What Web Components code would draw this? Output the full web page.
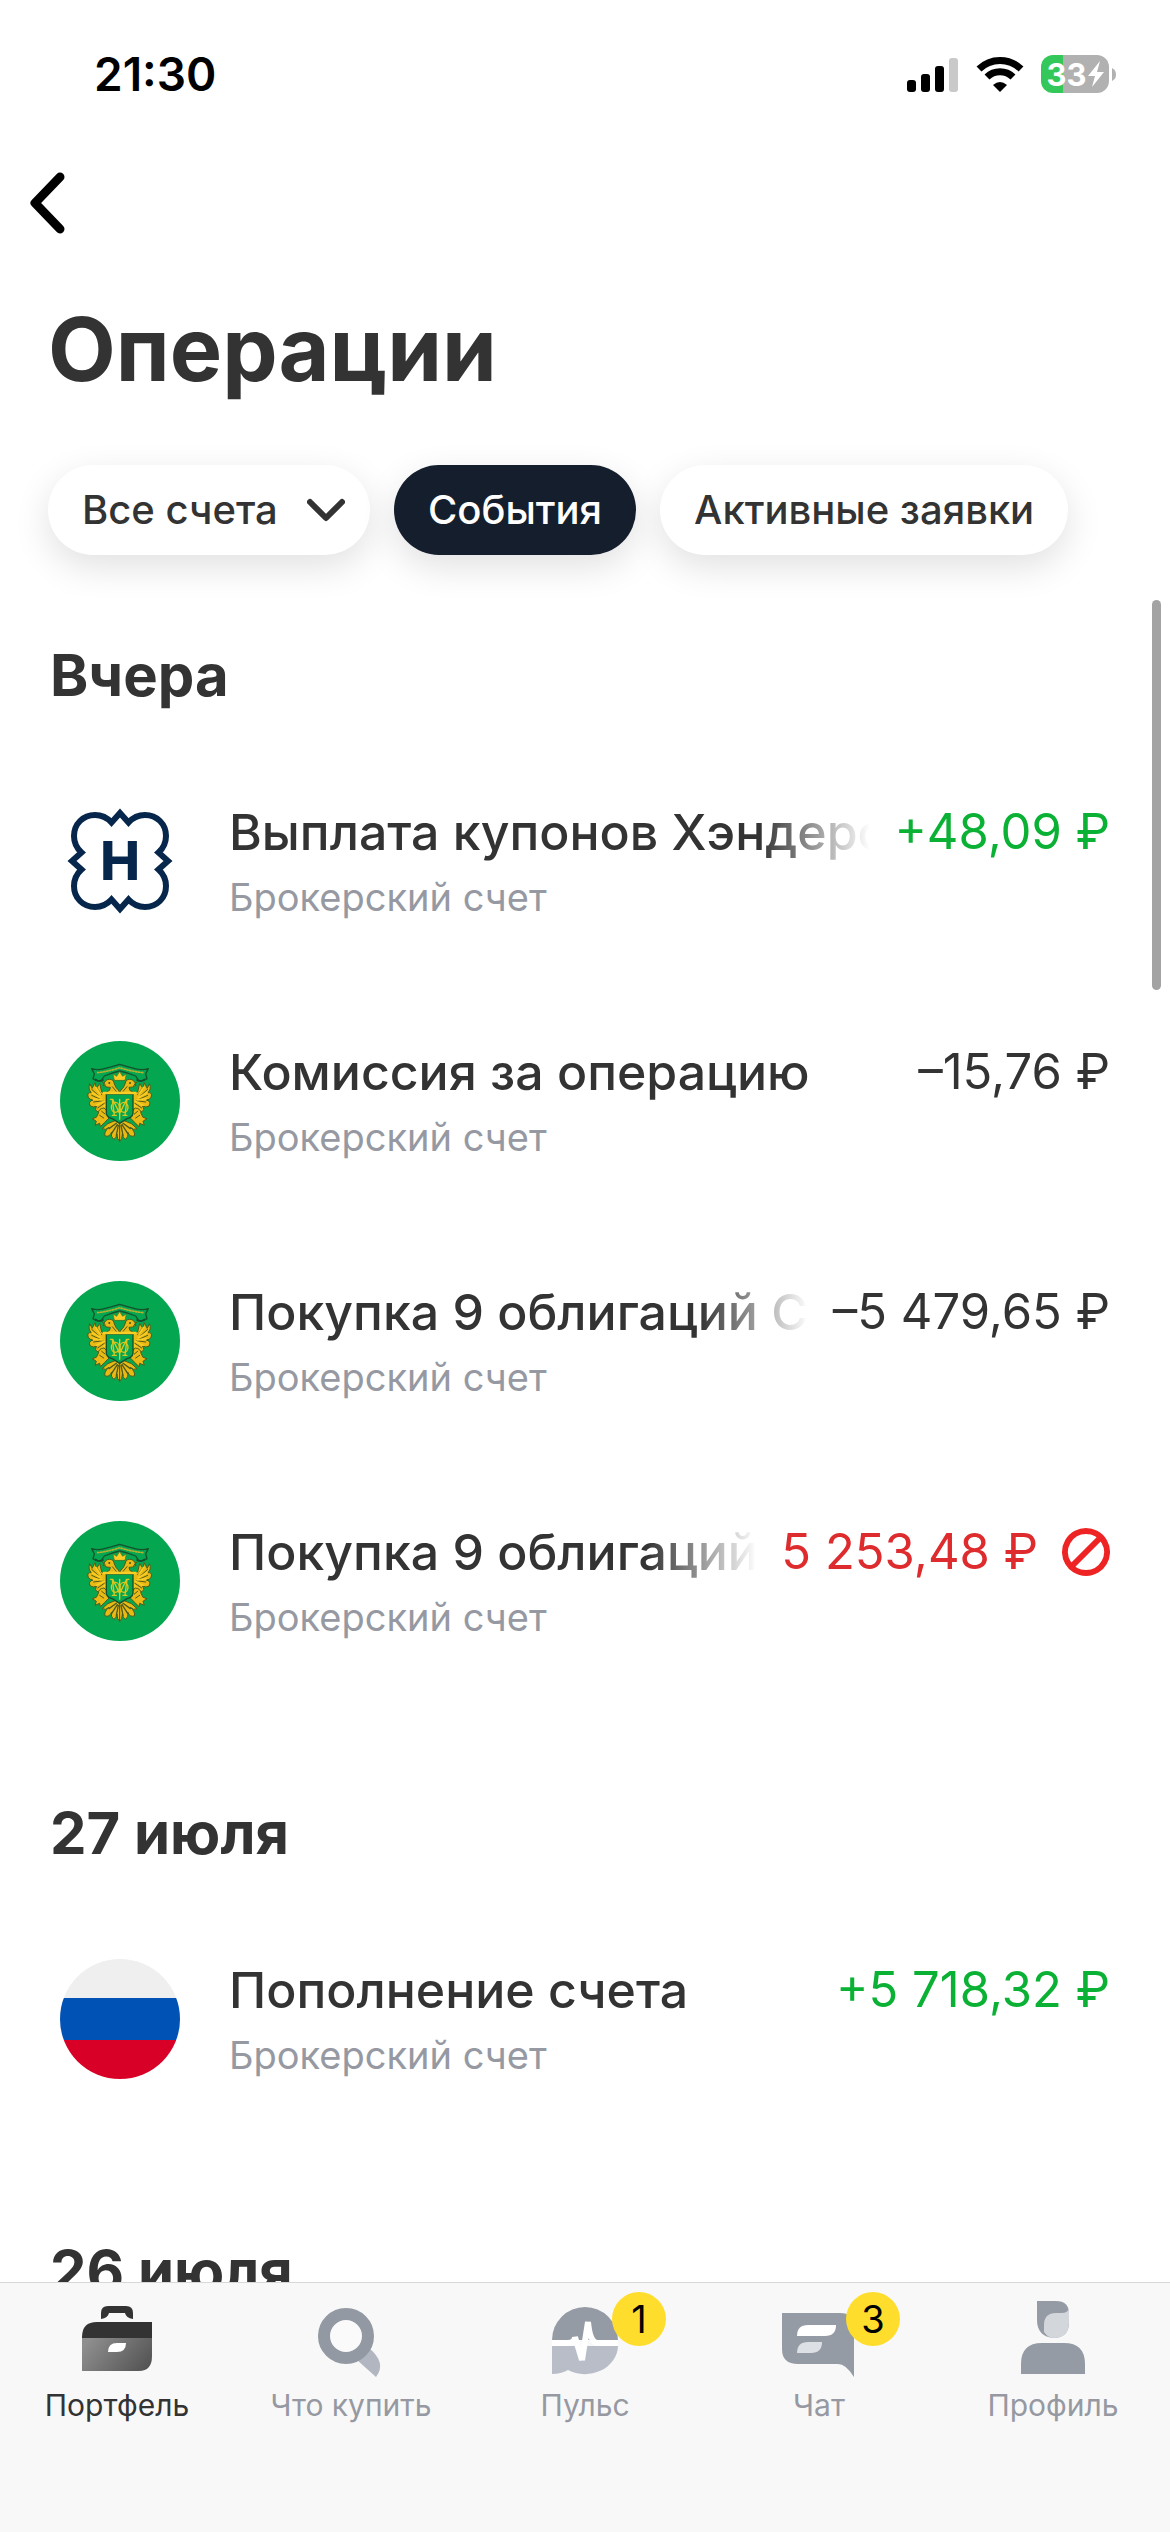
<!DOCTYPE html>
<html lang="ru">
<head>
<meta charset="utf-8">
<meta name="viewport" content="width=device-width, initial-scale=1">
<title>Операции</title>
<style>
  body {
    margin: 0;
    background: #fff;
    color: #333;
    font-family: Inter, "Open Sans", sans-serif;
  }
</style>
</head>
<body>
<app-screen>
  <status-bar slot="top" time="21:30" battery="33"></status-bar>
  <page-header slot="top">
    Операции
    <filter-select slot="filters" value="Все счета"></filter-select>
    <filter-chip slot="filters" active>События</filter-chip>
    <filter-chip slot="filters">Активные заявки</filter-chip>
  </page-header>

  <day-group heading="Вчера">
    <operation-row logo="henderson" amount="+48,09 ₽" kind="income" fade>Выплата купонов Хэндерс</operation-row>
    <operation-row logo="emblem" amount="–15,76 ₽">Комиссия за операцию</operation-row>
    <operation-row logo="emblem" amount="–5 479,65 ₽" fade>Покупка 9 облигаций С</operation-row>
    <operation-row logo="emblem" amount="5 253,48 ₽" kind="rejected" fade>Покупка 9 облигаций</operation-row>
  </day-group>
  <day-group heading="27 июля">
    <operation-row logo="flag" amount="+5 718,32 ₽" kind="income">Пополнение счета</operation-row>
  </day-group>
  <day-group heading="26 июля"></day-group>

  <tab-bar slot="bottom">
    <tab-item icon="portfolio" active>Портфель</tab-item>
    <tab-item icon="search">Что купить</tab-item>
    <tab-item icon="pulse" badge="1">Пульс</tab-item>
    <tab-item icon="chat" badge="3">Чат</tab-item>
    <tab-item icon="profile">Профиль</tab-item>
  </tab-bar>
</app-screen>

<script>
// Round logos of the operations, all on a 120x120 box
const LOGOS = {
  henderson: `
    <svg viewBox="0 0 120 120" aria-hidden="true">
      <path fill="none" stroke="#06264b" stroke-width="6" d="M60 12 L51.5 21.5 C47 16.500 41 14 35 14 C23 14 14 23 14 35 C14 41 16.500 47 21.500 51.500 L12 60 L21.500 68.500 C16.500 73 14 79 14 85 C14 97 23 106 35 106 C41 106 47 103.500 51.500 98.500 L60 108 L68.500 98.500 C73 103.500 79 106 85 106 C97 106 106 97 106 85 C106 79 103.500 73 98.500 68.500 L108 60 L98.500 51.500 C103.500 47 106 41 106 35 C106 23 97 14 85 14 C79 14 73 16.500 68.500 21.500 Z"/>
      <text x="60" y="79" text-anchor="middle" font-size="53" font-weight="800" fill="#06264b">H</text>
    </svg>`,
  emblem: `
    <svg viewBox="0 0 120 120" aria-hidden="true">
      <circle cx="60" cy="60" r="60" fill="#05a650"/>
      <g transform="translate(25 19) scale(.3333)" stroke-linejoin="round" stroke-linecap="round">
        <!-- ribbon -->
        <path fill="#05a650" stroke="#14512c" stroke-width="4" d="M20 26 Q38 32 58 26 Q82 20 104 13 Q128 20 150 26 Q172 32 190 26 L182 42 L186 56 Q172 66 160 60 L152 48 Q128 38 104 33 Q82 38 58 48 L50 60 Q36 66 24 56 L28 42 Z"/>
        <path fill="none" stroke="#b9b02f" stroke-width="5" stroke-dasharray="4 5" d="M38 38 Q72 34 104 23 Q138 34 174 38"/>
        <path fill="none" stroke="#14512c" stroke-width="5" d="M32 58 Q42 68 54 60 M178 58 Q168 68 156 60"/>
        <g id="half">
          <!-- wing feathers -->
          <path fill="#e9ba16" stroke="#4d5a1c" stroke-width="3" d="M14 72 Q8 90 20 98 Q4 96 10 112 Q14 120 24 120 Q8 124 16 138 Q24 144 36 138 Q26 150 40 156 Q52 160 66 146 L68 104 L50 96 L44 70 L34 86 L30 68 L22 84 Z"/>
          <path fill="none" stroke="#4d5a1c" stroke-width="3" d="M20 88 L42 108 M20 106 L46 118 M26 126 L54 122 M38 144 L58 130 M36 84 L50 104"/>
          <path fill="none" stroke="#f8cd24" stroke-width="5" d="M32 82 L46 102 M22 98 L48 113 M24 116 L52 120 M34 136 L58 124 M48 150 L62 134"/>
          <!-- head and neck -->
          <path fill="#e9ba16" stroke="#4d5a1c" stroke-width="3" d="M56 76 Q58 58 74 58 Q86 58 88 72 Q92 84 100 90 L104 98 L62 98 Q78 92 76 82 Q66 84 56 76 Z"/>
          <circle cx="73" cy="69" r="3" fill="#40501c"/>
          <path fill="none" stroke="#4d5a1c" stroke-width="3" d="M52 66 L62 76 M82 80 L94 94"/>
          <!-- leg and claw -->
          <path fill="#e9ba16" stroke="#4d5a1c" stroke-width="3" d="M56 144 Q40 146 40 160 L34 172 L22 176 L34 184 L30 196 L44 190 L46 200 L58 188 L72 174 L66 154 Z"/>
          <path fill="none" stroke="#4d5a1c" stroke-width="3" d="M50 154 L60 162 M44 166 L56 174"/>
          <!-- tail feathers -->
          <path fill="#e9ba16" stroke="#4d5a1c" stroke-width="3" d="M90 182 Q66 188 52 206 Q62 212 72 202 Q56 216 60 228 Q74 232 80 216 Q76 230 86 238 Q94 236 96 222 Q96 238 104 244 L104 184 Z"/>
          <path fill="none" stroke="#4d5a1c" stroke-width="4" d="M94 190 L72 206 M97 194 L80 220 M100 196 L94 226"/>
        </g>
        <use href="#half" transform="translate(208 0) scale(-1 1)"/>
        <!-- crown -->
        <path fill="#f8cd24" stroke="#6a6a1c" stroke-width="2" d="M88 60 L84 42 L95 49 L104 35 L113 49 L124 42 L120 60 Z"/>
        <path fill="#05a650" d="M94 68 H114 V80 L104 90 L94 80 Z"/>
        <!-- shield with a monogram -->
        <path fill="#05a650" stroke="#14512c" stroke-width="4" d="M64 102 H144 V160 Q142 172 126 176 L104 190 L82 176 Q66 172 64 160 Z"/>
        <path fill="none" stroke="#f8cd24" stroke-width="7" d="M56 99 H152"/>
        <path fill="none" stroke="#d9c820" stroke-width="4" d="M82 118 L88 166 M126 118 L120 166 M104 118 V178 M84 120 L104 160 L124 120 M84 118 H76 M124 118 H132 M82 166 H94 M114 166 H126"/>
        <ellipse cx="91" cy="142" rx="12" ry="15" fill="none" stroke="#d9c820" stroke-width="4"/>
        <ellipse cx="117" cy="142" rx="12" ry="15" fill="none" stroke="#d9c820" stroke-width="4"/>
      </g>
    </svg>`,
  flag: `
    <svg viewBox="0 0 120 120" aria-hidden="true">
      <clipPath id="round"><circle cx="60" cy="60" r="60"/></clipPath>
      <g clip-path="url(#round)">
        <path fill="#efefef" d="M0 0h120v39H0z"/>
        <path fill="#0052b5" d="M0 39h120v42H0z"/>
        <path fill="#d80027" d="M0 81h120v39H0z"/>
      </g>
    </svg>`,
};

// Tab icons, on a 78x78 box
const TAB_ICONS = {
  portfolio: `
    <svg viewBox="0 0 78 78" aria-hidden="true">
      <defs><linearGradient id="g" x1="0" y1="0.300" x2="1" y2="0.700"><stop offset="0" stop-color="#8e8e8e"/><stop offset="1" stop-color="#555"/></linearGradient></defs>
      <path fill="#333" d="M23 19v-6q0-7 7-7h18q7 0 7 7v6q-7-1-8-6h-16q-1 5-8 6z"/>
      <path fill="#333" d="M4 38v-1Q4 22 19 22H74v16z"/>
      <path fill="url(#g)" d="M4 38H74v18q0 15-13 15H4z"/>
      <path fill="#fff" d="M30 52q0-9 9-9h9q0 9-9 9z"/>
    </svg>`,
  search: `
    <svg viewBox="0 0 78 78" aria-hidden="true">
      <path fill="#b2b6c0" d="M45 60l12-12q18 15 7 29z"/>
      <circle cx="34" cy="36" r="22" fill="#fafafa" stroke="#9299a2" stroke-width="12"/>
    </svg>`,
  pulse: `
    <svg viewBox="0 0 78 78" aria-hidden="true">
      <path fill="#959ba4" d="M6 40a33 33 0 0 1 66 0z"/>
      <path fill="#b9bdc7" d="M6 46H72a33 29 0 0 1-50 24Q15 74 6 74z"/>
      <path fill="none" stroke="#fff" stroke-width="6" stroke-linejoin="bevel" d="M6 43H22Q29 43 29 37L36 60L42 22Q44 43 52 43H72"/>
    </svg>`,
  chat: `
    <svg viewBox="0 0 78 78" aria-hidden="true">
      <path fill="#959ba4" d="M2 13H60q14 0 14 13V77Q66 64 58 64H18Q2 64 2 49z"/>
      <path fill="#fff" d="M17 36q0-11 11-11h28q0 11-11 11z"/>
      <path fill="#dde0e4" d="M17 53q0-11 11-11h14q0 11-11 11z"/>
    </svg>`,
  profile: `
    <svg viewBox="0 0 78 78" aria-hidden="true">
      <path fill="#959ba4" d="M23 1H42q13 0 13 13V22Q55 38 39 38Q23 36 23 20z"/>
      <path fill="#d3d6da" d="M30 32V25q0-12 12-12h5q8 0 8-6V22Q55 38 40 38Q34 38 30 32z"/>
      <path fill="#959ba4" d="M7 74V64Q7 43 28 43H50Q71 43 71 64V74z"/>
    </svg>`,
};

class AppScreen extends HTMLElement {
  constructor() {
    super();
    this.attachShadow({ mode: "open" });
    this.shadowRoot.innerHTML = `
      <style>
        :host {
          display: flex;
          flex-direction: column;
          height: 100vh;
        }
        main {
          position: relative;
          flex: 1;
          min-height: 0;
          overflow: hidden;
          display: flex;
          flex-direction: column;
          gap: 96px;
          padding-top: 57px;
          box-sizing: border-box;
        }
        main ::slotted(*) {
          flex-shrink: 0;
        }
        /* scroll position, drawn over the list */
        .thumb {
          position: absolute;
          top: 18px;
          right: 9px;
          width: 9px;
          height: 390px;
          border-radius: 5px;
          background: #a3a3a3;
        }
      </style>
      <slot name="top"></slot>
      <main>
        <slot></slot>
        <div class="thumb"></div>
      </main>
      <slot name="bottom"></slot>`;
  }
}

class StatusBar extends HTMLElement {
  connectedCallback() {
    this.attachShadow({ mode: "open" });
    this.shadowRoot.innerHTML = `
      <style>
        :host {
          display: flex;
          align-items: center;
          justify-content: space-between;
          height: 148px;
          padding: 0 54px 0 94px;
          color: #000;
        }
        time {
          font-size: 46px;
          font-weight: 600;
        }
        .icons {
          display: flex;
          align-items: center;
          gap: 16px;
        }
        svg {
          display: block;
        }
        .battery {
          display: flex;
          align-items: center;
          gap: 3px;
        }
        .level {
          display: flex;
          align-items: center;
          justify-content: center;
          gap: 1px;
          width: 68px;
          height: 38px;
          border-radius: 12px;
          background: linear-gradient(to right, #34c759 33%, #b1b1b1 33%);
          color: #fff;
          font-size: 31px;
          font-weight: 700;
        }
      </style>
      <time>${this.getAttribute("time")}</time>
      <div class="icons">
        <svg width="52" height="36" viewBox="0 0 52 36" aria-hidden="true">
          <rect y="24" width="9" height="12" rx="3"/>
          <rect x="14" y="18" width="9" height="18" rx="3"/>
          <rect x="28" y="10" width="9" height="26" rx="3"/>
          <rect x="42" y="2" width="9" height="34" rx="3" fill="#c9c9c9"/>
        </svg>
        <svg width="50" height="36" viewBox="0 0 50 36" aria-hidden="true">
          <path fill="none" stroke="#000" stroke-width="7" d="M4 13A30 30 0 0 1 46 13M12 21A18.500 18.500 0 0 1 38 21"/>
          <path d="M25 36L18 29Q25 23 32 29Z"/>
        </svg>
        <div class="battery">
          <div class="level">
            <span>${this.getAttribute("battery")}</span>
            <svg width="16" height="26" viewBox="0 0 16 26" aria-hidden="true"><path fill="#fff" d="M12 0L0 15H7L4 26L16 11H9Z"/></svg>
          </div>
          <svg width="4" height="13" viewBox="0 0 4 13" aria-hidden="true"><path fill="#b1b1b1" d="M0 0Q4 2 4 6.500Q4 11 0 13Z"/></svg>
        </div>
      </div>`;
  }
}

class PageHeader extends HTMLElement {
  constructor() {
    super();
    this.attachShadow({ mode: "open" });
    this.shadowRoot.innerHTML = `
      <style>
        :host {
          display: block;
          padding-top: 12px;
        }
        .back {
          display: block;
          margin-left: 18px;
          padding: 12px;
          border: 0;
          background: none;
        }
        .back svg {
          display: block;
        }
        h1 {
          margin: 49px 48px 62px;
          font-size: 88px;
          line-height: 108px;
          font-weight: 700;
        }
        .filters {
          display: flex;
          gap: 24px;
          padding: 0 48px 27px;
        }
      </style>
      <button class="back" aria-label="Назад">
        <svg width="36" height="62" viewBox="0 0 36 62" aria-hidden="true">
          <path fill="none" stroke="#000" stroke-width="9" stroke-linecap="round" stroke-linejoin="round" d="M30 5L5 31L30 57"/>
        </svg>
      </button>
      <h1><slot></slot></h1>
      <div class="filters"><slot name="filters"></slot></div>`;
  }
}

// Box shared by the two kinds of filters
const CHIP_STYLE = `
  :host {
    display: block;
  }
  button, select {
    height: 90px;
    border: 0;
    border-radius: 45px;
    margin: 0;
    padding: 0 34px;
    background: #fff;
    color: inherit;
    font: 500 40px/48px Inter, "Open Sans", sans-serif;
    white-space: nowrap;
    box-shadow: 0 12px 36px rgba(0, 0, 0, 0.12);
  }`;

class FilterChip extends HTMLElement {
  constructor() {
    super();
    this.attachShadow({ mode: "open" });
    this.shadowRoot.innerHTML = `
      <style>
        ${CHIP_STYLE}
        :host([active]) button {
          background: #151e2c;
          color: #fff;
        }
      </style>
      <button><slot></slot></button>`;
  }
}

class FilterSelect extends HTMLElement {
  connectedCallback() {
    this.attachShadow({ mode: "open" });
    this.shadowRoot.innerHTML = `
      <style>
        ${CHIP_STYLE}
        label {
          display: grid;
          align-items: center;
        }
        select, svg {
          grid-area: 1 / 1;
        }
        select {
          appearance: none;
          padding-right: 92px;
        }
        svg {
          justify-self: end;
          margin-right: 25px;
          pointer-events: none;
        }
      </style>
      <label>
        <select aria-label="Счет"><option>${this.getAttribute("value")}</option></select>
        <svg width="38" height="24" viewBox="0 0 38 24" aria-hidden="true">
          <path fill="none" stroke="#333" stroke-width="6" stroke-linecap="round" stroke-linejoin="round" d="M3 4L19 20L35 4"/>
        </svg>
      </label>`;
  }
}

class DayGroup extends HTMLElement {
  connectedCallback() {
    this.attachShadow({ mode: "open" });
    this.shadowRoot.innerHTML = `
      <style>
        :host {
          display: block;
        }
        h2 {
          margin: 0 50px 30px;
          font-size: 58px;
          line-height: 72px;
          font-weight: 700;
        }
      </style>
      <h2>${this.getAttribute("heading")}</h2>
      <slot></slot>`;
  }
}

class OperationRow extends HTMLElement {
  connectedCallback() {
    const rejected = this.getAttribute("kind") === "rejected";
    this.attachShadow({ mode: "open" });
    this.shadowRoot.innerHTML = `
      <style>
        :host {
          display: flex;
          gap: 49px;
          padding: 60px;
        }
        .logo {
          flex: none;
          width: 120px;
          height: 120px;
        }
        .logo svg {
          display: block;
        }
        .text {
          flex: 1;
          min-width: 0;
        }
        .line {
          display: flex;
          align-items: center;
          gap: 24px;
          font-size: 49px;
          line-height: 62px;
          white-space: nowrap;
        }
        .title {
          flex: 1;
          min-width: 0;
          overflow: hidden;
          font-size: 50px;
          font-weight: 500;
        }
        /* a long title fades out before the amount */
        :host([fade]) .title {
          mask-image: linear-gradient(to left, transparent, #000 110px);
        }
        :host([kind="income"]) .amount {
          color: #0bb134;
        }
        :host([kind="rejected"]) .amount {
          color: #dd2b2e;
        }
        .line svg {
          flex: none;
        }
        .account {
          margin: 10px 0 0;
          color: #9699a2;
          font-size: 38px;
          line-height: 48px;
        }
      </style>
      <div class="logo">${LOGOS[this.getAttribute("logo")]}</div>
      <div class="text">
        <div class="line">
          <span class="title"><slot></slot></span>
          <span class="amount">${this.getAttribute("amount")}</span>
          ${rejected ? `
          <svg width="48" height="48" viewBox="0 0 48 48" aria-hidden="true">
            <path fill="none" stroke="#ee2424" stroke-width="6" d="M24 3a21 21 0 1 0 .01 0zM9.500 38.500L38.500 9.500"/>
          </svg>` : ""}
        </div>
        <p class="account">Брокерский счет</p>
      </div>`;
  }
}

class TabBar extends HTMLElement {
  constructor() {
    super();
    this.attachShadow({ mode: "open" });
    this.shadowRoot.innerHTML = `
      <style>
        :host {
          display: block;
          border-top: 1px solid #d8d8d8;
          background: #f8f8f8;
        }
        nav {
          display: flex;
          padding: 17px 0 106px;
        }
        ::slotted(*) {
          flex: 1;
        }
      </style>
      <nav><slot></slot></nav>`;
  }
}

class TabItem extends HTMLElement {
  connectedCallback() {
    const badge = this.getAttribute("badge");
    this.attachShadow({ mode: "open" });
    this.shadowRoot.innerHTML = `
      <style>
        :host {
          display: block;
        }
        a {
          display: flex;
          flex-direction: column;
          align-items: center;
          gap: 6px;
          color: #9699a2;
          font-size: 30px;
          line-height: 42px;
          text-decoration: none;
        }
        :host([active]) a {
          color: #333;
        }
        .icon {
          position: relative;
        }
        svg {
          display: block;
          width: 78px;
          height: 78px;
        }
        .badge {
          position: absolute;
          top: -8px;
          left: 66px;
          width: 54px;
          border-radius: 27px;
          background: #ffdd2d;
          color: #000;
          font-size: 38px;
          line-height: 54px;
          text-align: center;
        }
      </style>
      <a href="#${this.getAttribute("icon")}">
        <span class="icon">
          ${TAB_ICONS[this.getAttribute("icon")]}
          ${badge ? `<span class="badge">${badge}</span>` : ""}
        </span>
        <slot></slot>
      </a>`;
  }
}

customElements.define("app-screen", AppScreen);
customElements.define("status-bar", StatusBar);
customElements.define("page-header", PageHeader);
customElements.define("filter-chip", FilterChip);
customElements.define("filter-select", FilterSelect);
customElements.define("day-group", DayGroup);
customElements.define("operation-row", OperationRow);
customElements.define("tab-bar", TabBar);
customElements.define("tab-item", TabItem);
</script>
</body>
</html>
